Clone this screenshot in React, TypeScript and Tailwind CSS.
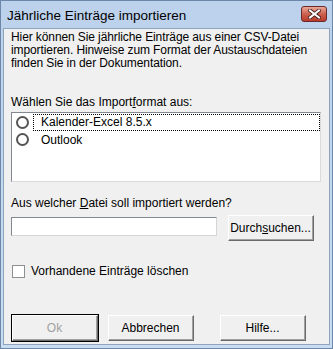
const font = { fontFamily: '"Liberation Sans", Arial, sans-serif' };

const Btn = ({
  label,
  def,
  disabled,
  className,
}: {
  label: React.ReactNode;
  def?: boolean;
  disabled?: boolean;
  className?: string;
}) => (
  <div
    className={`${className ?? ""} ${def ? "border border-black" : "border border-transparent"}`}
  >
    <div className="h-full w-full border-t border-l border-t-white border-l-white border-r border-b border-r-[#696969] border-b-[#696969]">
      <div className="h-full w-full border-r border-b border-r-[#a0a0a0] border-b-[#a0a0a0] bg-[#f0f0f0] flex items-center justify-center">
        <span className={disabled ? "text-[#a0a0a0]" : "text-black"}>{label}</span>
      </div>
    </div>
  </div>
);

const Radio = () => (
  <div className="w-[13px] h-[13px] rounded-full border-2 border-[#555] bg-white shrink-0" />
);

export default function App() {
  return (
    <div
      className="w-[333px] h-[349px] bg-gradient-to-b from-[#bcd2ec] to-[#c9dcf2] border border-[#6d87a8] flex flex-col text-[12px] text-black select-none"
      style={font}
    >
      {/* Title bar */}
      <div className="h-[27px] flex items-center justify-between pl-[6px] pr-[5px]">
        <span className="text-[13.5px] leading-none mt-[2px]">Jährliche Einträge importieren</span>
        <div className="w-[26px] h-[16px] -mt-[1px] rounded-[3px] border border-[#6b2a2a] bg-gradient-to-b from-[#e9a898] via-[#cc604e] to-[#b93a2a] flex items-center justify-center">
          <svg width="13" height="10" viewBox="0 0 13 10">
            <path d="M2 1.5 L11 8.5 M11 1.5 L2 8.5" stroke="#3b1a1a" strokeWidth="3.6" strokeLinecap="square" />
            <path d="M2 1.5 L11 8.5 M11 1.5 L2 8.5" stroke="#ffffff" strokeWidth="2" strokeLinecap="square" />
          </svg>
        </div>
      </div>

      {/* Client area */}
      <div className="mx-[2px] mb-[3px] flex-1 bg-[#f0f0f0] border border-[#8ea3be] pl-[7px] flex flex-col">
        <p className="mt-[2px] leading-[13px] w-[316px] tracking-[-0.1px]">
          Hier können Sie jährliche Einträge aus einer CSV-Datei importieren. Hinweise zum Format der Austauschdateien finden Sie in der Dokumentation.
        </p>

        <div className="mt-[26px] leading-[13px]">
          Wählen Sie das Import<span className="underline">f</span>ormat aus:
        </div>

        <div className="mt-[3px] w-[310px] h-[70px] bg-white border border-t-[#828790] border-l-[#828790] border-r-[#dadada] border-b-[#dadada] flex flex-col">
          <div className="flex items-center h-[18px] pl-[4px]">
            <Radio />
            <div className="ml-[4px] flex-1 h-[17px] border border-dotted border-black flex items-center pl-[7px]">
              Kalender-Excel 8.5.x
            </div>
          </div>
          <div className="flex items-center h-[17px] pl-[4px]">
            <Radio />
            <div className="ml-[4px] pl-[8px]">Outlook</div>
          </div>
        </div>

        <div className="mt-[15px] leading-[13px]">
          Aus welcher <span className="underline">D</span>atei soll importiert werden?
        </div>

        <div className="mt-[4px] flex items-start">
          <div className="mt-[3px] w-[206px] h-[19px] bg-white border border-t-[#828790] border-l-[#828790] border-r-[#d5d5d5] border-b-[#d5d5d5]" />
          <Btn
            className="ml-[10px] w-[88px] h-[28px]"
            label={
              <>
                Durch<span className="underline">s</span>uchen...
              </>
            }
          />
        </div>

        <div className="mt-[20px] flex items-center">
          <div className="w-[13px] h-[13px] border border-[#8e8f8f] bg-white ml-[1px]" />
          <span className="ml-[6px]">Vorhandene Einträge löschen</span>
        </div>

        <div className="mt-[34px] flex">
          <Btn def disabled className="w-[88px] h-[28px]" label="Ok" />
          <Btn className="ml-[8px] w-[88px] h-[28px]" label="Abbrechen" />
          <Btn className="ml-[24px] w-[88px] h-[28px]" label="Hilfe..." />
        </div>
      </div>
    </div>
  );
}
